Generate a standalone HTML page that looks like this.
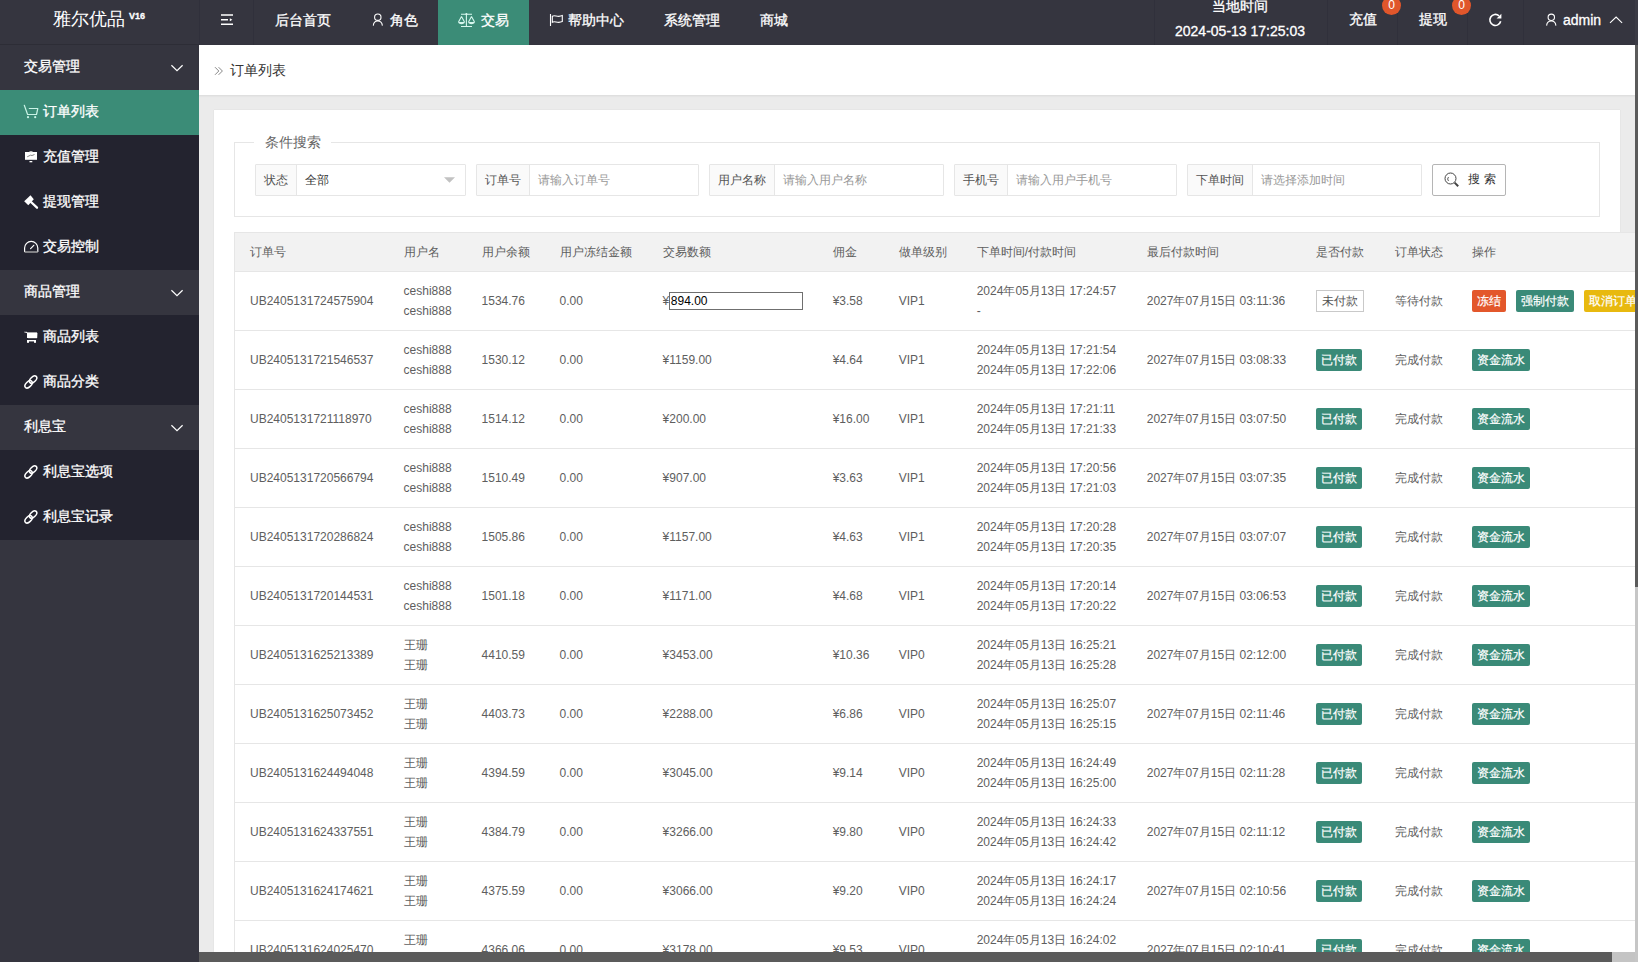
<!DOCTYPE html>
<html><head><meta charset="utf-8">
<style>
*{box-sizing:border-box;margin:0;padding:0}
html,body{width:1638px;height:962px;overflow:hidden}
body{font-family:"Liberation Sans",sans-serif;background:#ebebeb;position:relative;color:#666}
.abs{position:absolute}
#hd{left:0;top:0;width:1638px;height:45px;background:#35353f;color:#fff;font-size:14px}
#hd .t{position:absolute;white-space:nowrap;line-height:16px;-webkit-text-stroke:0.3px #fff}
#hd .sep{position:absolute;top:0;width:1px;height:45px;background:#30303b}
#logo{left:0;top:0;width:199px;height:45px}
#side{left:0;top:45px;width:199px;height:917px;background:#35353f;color:#fff;font-size:14px;-webkit-text-stroke:0.3px #fff}
#side .g,#side .i{position:relative;height:45px;line-height:43px;padding-bottom:2px;white-space:nowrap}
#side .g{background:#35353f;padding-left:24px}
#side .i{background:#23232f;padding-left:43px}
#side .i.on{background:#3b8c77}
#side .ic{position:absolute;left:24px;top:16px;width:14px;height:14px}
#side .arr{position:absolute;left:171px;top:19px}
#bc{left:199px;top:45px;width:1439px;height:50px;background:#fff;box-shadow:0 1px 2px rgba(0,0,0,.08)}
#card{left:214px;top:110px;width:1406px;height:900px;background:#fff;box-shadow:0 0 1px rgba(0,0,0,.12)}
#fs{left:234px;top:142px;width:1366px;height:75px;border:1px solid #e6e6e6}
#lg{left:254px;top:132px;width:77px;height:20px;background:#fff;font-size:14px;line-height:20px;text-align:center;color:#666}
.ig{position:absolute;top:164px;height:32px;border:1px solid #e6e6e6;border-radius:1px;background:#fff;font-size:12px}
.ig .lb{position:absolute;left:0;top:0;height:30px;line-height:30px;background:#fafafa;border-right:1px solid #e6e6e6;text-align:center;color:#555}
.ig .ph{position:absolute;top:0;line-height:30px;color:#999;white-space:nowrap}
#tbl{left:234px;top:232px;width:1483px;border-collapse:collapse;font-size:12px;color:#5e5e5e;background:#fff;table-layout:fixed;border-left:1px solid #e6e6e6}
#tbl th{background:#f2f2f2;font-weight:normal;text-align:left;height:39px;padding:0 15px;border-bottom:1px solid #e6e6e6;border-top:1px solid #e6e6e6;white-space:nowrap;line-height:20px}
#tbl td{height:59px;padding:9px 15px;line-height:20px;border-bottom:1px solid #e6e6e6;white-space:nowrap;vertical-align:middle}
.amt-in{display:inline-block;position:relative;top:-1px;margin-left:0;width:134px;height:18px;border:1px solid #6f6f6f;border-radius:0;line-height:16px;color:#000;padding-left:0.5px;vertical-align:middle}
.tag-out{display:inline-block;height:22px;line-height:20px;padding:0 5px;border:1px solid #c9c9c9;color:#555;border-radius:0}
.tag-g{display:inline-block;height:22px;line-height:22px;padding:0 5px;background:#3a8a78;color:#fff;-webkit-text-stroke:0.2px #fff;border-radius:2px}
.btn{display:inline-block;height:22px;line-height:22px;padding:0 5px;color:#fff;-webkit-text-stroke:0.2px #fff;border-radius:2px;margin-right:10px}
.b-o{background:#e3572b}.b-g{background:#3a8a78}.b-y{background:#e8b90f}
#sbh{left:199px;top:952px;width:1413px;height:10px;background:#5b5b5b}
#sbh2{left:1612px;top:952px;width:23px;height:10px;background:#c4c4c4}
#sbv{left:1635px;top:45px;width:3px;height:542px;background:#5b5b5b}
#sbv2{left:1635px;top:587px;width:3px;height:375px;background:#c6c6c6}
</style></head><body>
<div id="hd" class="abs">
    <svg class="abs" style="left:0;top:0;z-index:3" width="1638" height="45" viewBox="0 0 1638 45">
  <g stroke="#fff" stroke-width="1.4" fill="none">
   <path d="M221 15H233M221 19.8H228M221 24.3H233"/>
  </g>
  <path d="M229.8 18.3L232.4 19.8L229.8 21.3Z" fill="#fff"/>
  <g stroke="#fff" stroke-width="1.1" fill="none">
   <circle cx="377.8" cy="17.2" r="3.2"/>
   <path d="M373.3 25.6C373.6 22.6 375.6 21 377.8 21S382 22.6 382.4 25.6"/>
   <circle cx="1551.3" cy="17.3" r="3.2"/>
   <path d="M1546.6 25.6C1546.9 22.6 1548.9 21 1551.3 21S1555.6 22.6 1555.9 25.6"/>
   <path d="M1610 22.9L1616.1 17L1622.1 22.9"/>
  </g>
  <g stroke="#d6f7ee" stroke-width="1.1" fill="none">
   <path d="M461 14.3H472M466.4 14.3V26.5M461 26.5H472"/>
   <path d="M461.5 16.5L458.5 22M461.5 16.5L464.5 22M471.5 16.5L468.5 22M471.5 16.5L474.5 22"/>
  </g>
  <circle cx="466.4" cy="14" r="1" fill="#d6f7ee"/>
  <path d="M458.2 22H464.8C464.8 23.3 463.5 24.2 461.5 24.2S458.2 23.3 458.2 22Z M468.2 22H474.8C474.8 23.3 473.5 24.2 471.5 24.2S468.2 23.3 468.2 22Z" fill="#d6f7ee"/>
  <g stroke="#fff" stroke-width="1.1" fill="none">
   <path d="M550.5 14V26"/>
   <path d="M552.3 16.2C555 14.6 557.5 17.8 562.3 15.6V21.6C557.5 23.8 555 20.6 552.3 22.2Z"/>
  </g>
  <path d="M1500.7 21.3A5.5 5.5 0 1 1 1499 15.8" stroke="#fff" stroke-width="1.6" fill="none"/>
  <path d="M1496.6 18.6H1501.4V13.8Z" fill="#fff"/>
  </svg>
  <div class="t" style="left:53px;top:9px;font-size:18px;line-height:20px;-webkit-text-stroke:0">雅尔优品</div><div class="t" style="left:129px;top:11px;font-size:9px;line-height:10px;font-weight:bold">V16</div>
  <div class="sep" style="left:199px"></div>
  <div class="sep" style="left:253px"></div>
    <div class="t" style="left:275px;top:12px">后台首页</div>
    <div class="t" style="left:390px;top:12px">角色</div>
  <div class="abs" style="left:438px;top:0;width:91px;height:45px;background:#3b8c77"></div>
    <div class="t" style="left:481px;top:12px">交易</div>
    <div class="t" style="left:568px;top:12px">帮助中心</div>
  <div class="t" style="left:664px;top:12px">系统管理</div>
  <div class="t" style="left:760px;top:12px">商城</div>
  <div class="sep" style="left:1154px"></div>
  <div class="t" style="left:1212px;top:-2px">当地时间</div>
  <div class="t" style="left:1175px;top:23px">2024-05-13 17:25:03</div>
  <div class="sep" style="left:1327px"></div>
  <div class="t" style="left:1349px;top:11px">充值</div>
  <div class="abs" style="left:1382px;top:-4px;width:19px;height:19px;border-radius:50%;z-index:4;background:#e0562b;color:#fff;font-size:12px;line-height:19px;text-align:center">0</div>
  <div class="sep" style="left:1397px"></div>
  <div class="t" style="left:1419px;top:11px">提现</div>
  <div class="abs" style="left:1452px;top:-4px;width:19px;height:19px;border-radius:50%;z-index:4;background:#e0562b;color:#fff;font-size:12px;line-height:19px;text-align:center">0</div>
  <div class="sep" style="left:1467px"></div>
    <div class="sep" style="left:1523px"></div>
    <div class="t" style="left:1563px;top:12px">admin</div>
  </div>
<div id="side" class="abs">
  <div class="g">交易管理<svg class="arr" width="13" height="8" viewBox="0 0 13 8"><path d="M0.4 1.3L6 6.6L11.6 1.3" stroke="#fff" stroke-width="1.2" fill="none"/></svg></div>
  <div class="i on">订单列表</div>
  <div class="i">充值管理</div>
  <div class="i">提现管理</div>
  <div class="i">交易控制</div>
  <div class="g">商品管理<svg class="arr" width="13" height="8" viewBox="0 0 13 8"><path d="M0.4 1.3L6 6.6L11.6 1.3" stroke="#fff" stroke-width="1.2" fill="none"/></svg></div>
  <div class="i">商品列表</div>
  <div class="i">商品分类</div>
  <div class="g">利息宝<svg class="arr" width="13" height="8" viewBox="0 0 13 8"><path d="M0.4 1.3L6 6.6L11.6 1.3" stroke="#fff" stroke-width="1.2" fill="none"/></svg></div>
  <div class="i">利息宝选项</div>
  <div class="i">利息宝记录</div>
</div>
<svg class="abs" style="left:0;top:0;z-index:5" width="199" height="540" viewBox="0 0 199 540">
<g fill="none" stroke="#c9f3e6" stroke-width="1.2" stroke-linecap="round" stroke-linejoin="round">
<path d="M24.3 105.3L27.6 114.5H36.5L37.8 108.5H29.3"/>
</g>
<circle cx="28" cy="117.2" r="1.1" fill="#c9f3e6"/><circle cx="35.2" cy="117.2" r="1.1" fill="#c9f3e6"/>
<rect x="25" y="152" width="12" height="7.8" fill="#fff"/>
<rect x="29.5" y="151" width="3" height="1.2" fill="#bbb"/>
<path d="M27.2 156.8L30.5 155.2L32 155.5L34.5 154.5" stroke="#777" stroke-width="0.9" fill="none"/>
<rect x="29.5" y="161" width="2.8" height="1.3" fill="#fff"/>
<path d="M24.2 201.3L30.5 195.2L33.8 199.3L28.3 205.2Z" fill="#fff"/>
<path d="M31 202L37 207.7" stroke="#fff" stroke-width="2.3" stroke-linecap="round"/>
<path d="M24.6 252V248A6.6 6.6 0 0 1 37.8 248V252" stroke="#fff" stroke-width="1.2" fill="none"/>
<path d="M24.6 252H37.8" stroke="#aaa" stroke-width="1.4"/>
<path d="M30.6 248.6L33.8 245.3" stroke="#fff" stroke-width="1.2" stroke-linecap="round"/>
<path d="M24 332H27L28.2 336.5V338H37L37.2 333H27.5" fill="#fff" stroke="#fff" stroke-width="0.4"/>
<rect x="27" y="332.5" width="10" height="5.5" fill="#fff"/>
<rect x="27" y="340" width="9" height="1.4" fill="#fff"/>
<rect x="27" y="340" width="2" height="2.8" fill="#fff"/><rect x="34" y="340" width="2" height="2.8" fill="#fff"/>
<g fill="none" stroke="#fff" stroke-width="1.5">
<ellipse cx="33.1" cy="379.5" rx="4.4" ry="2.6" transform="rotate(-45 33.1 379.5)"/>
<ellipse cx="28.6" cy="384.3" rx="4.4" ry="2.6" transform="rotate(-45 28.6 384.3)"/>
<ellipse cx="33.1" cy="469.5" rx="4.4" ry="2.6" transform="rotate(-45 33.1 469.5)"/>
<ellipse cx="28.6" cy="474.3" rx="4.4" ry="2.6" transform="rotate(-45 28.6 474.3)"/>
<ellipse cx="33.1" cy="514.5" rx="4.4" ry="2.6" transform="rotate(-45 33.1 514.5)"/>
<ellipse cx="28.6" cy="519.3" rx="4.4" ry="2.6" transform="rotate(-45 28.6 519.3)"/>
</g>
</svg>
<div id="bc" class="abs">
  <svg class="abs" style="left:15px;top:21px" width="10" height="10" viewBox="0 0 10 10"><path d="M1 1.2L4.8 5L1 8.8M4.6 1.2L8.4 5L4.6 8.8" stroke="#888" stroke-width="1" fill="none"/></svg>
  <div class="abs" style="left:30.5px;top:16.5px;font-size:14px;color:#333;line-height:16px">订单列表</div>
</div>
<div id="card" class="abs"></div>
<div id="fs" class="abs"></div>
<div id="lg" class="abs">条件搜索</div>
<div class="ig" style="left:255px;width:211px"><div class="lb" style="width:41px">状态</div><div class="ph" style="left:49px;color:#333">全部</div><svg class="abs" style="left:188px;top:12px" width="11" height="6" viewBox="0 0 12 6"><path d="M0 0h12L6 6z" fill="#c2c2c2"/></svg></div>
<div class="ig" style="left:476px;width:223px"><div class="lb" style="width:53px">订单号</div><div class="ph" style="left:61px">请输入订单号</div></div>
<div class="ig" style="left:709px;width:235px"><div class="lb" style="width:65px">用户名称</div><div class="ph" style="left:73px">请输入用户名称</div></div>
<div class="ig" style="left:954px;width:223px"><div class="lb" style="width:53px">手机号</div><div class="ph" style="left:61px">请输入用户手机号</div></div>
<div class="ig" style="left:1187px;width:235px"><div class="lb" style="width:65px">下单时间</div><div class="ph" style="left:73px">请选择添加时间</div></div>
<div class="ig" style="left:1432px;width:74px;color:#333;border-color:#b5b5b5;border-radius:2px"><svg class="abs" style="left:11px;top:7px" width="17" height="17" viewBox="0 0 17 17"><circle cx="6.5" cy="6.5" r="5.5" stroke="#444" stroke-width="1" fill="none"/><path d="M10.6 10.6l3.6 3.6" stroke="#444" stroke-width="2"/><path d="M4.5 5a3 3 0 0 0 0 4" stroke="#333" stroke-width="0.8" fill="none"/></svg><div class="ph" style="left:35px;top:-1px;color:#333;letter-spacing:4px">搜索</div></div>
<table id="tbl" class="abs">
<colgroup><col style="width:154px"><col style="width:78px"><col style="width:78px"><col style="width:103px"><col style="width:170px"><col style="width:66px"><col style="width:78px"><col style="width:170px"><col style="width:169px"><col style="width:79px"><col style="width:77px"><col style="width:260px"></colgroup>
<tr><th>订单号</th><th>用户名</th><th>用户余额</th><th>用户冻结金额</th><th>交易数额</th><th>佣金</th><th>做单级别</th><th>下单时间/付款时间</th><th>最后付款时间</th><th>是否付款</th><th>订单状态</th><th>操作</th></tr>
<tr><td>UB2405131724575904</td><td>ceshi888<br>ceshi888</td><td>1534.76</td><td>0.00</td><td>¥<span class="amt-in">894.00</span></td><td>¥3.58</td><td>VIP1</td><td>2024年05月13日 17:24:57<br>-</td><td>2027年07月15日 03:11:36</td><td><span class="tag-out">未付款</span></td><td>等待付款</td><td class="ops"><span class="btn b-o">冻结</span><span class="btn b-g">强制付款</span><span class="btn b-y">取消订单</span></td></tr>
<tr><td>UB2405131721546537</td><td>ceshi888<br>ceshi888</td><td>1530.12</td><td>0.00</td><td>¥1159.00</td><td>¥4.64</td><td>VIP1</td><td>2024年05月13日 17:21:54<br>2024年05月13日 17:22:06</td><td>2027年07月15日 03:08:33</td><td><span class="tag-g">已付款</span></td><td>完成付款</td><td class="ops"><span class="btn b-g">资金流水</span></td></tr>
<tr><td>UB2405131721118970</td><td>ceshi888<br>ceshi888</td><td>1514.12</td><td>0.00</td><td>¥200.00</td><td>¥16.00</td><td>VIP1</td><td>2024年05月13日 17:21:11<br>2024年05月13日 17:21:33</td><td>2027年07月15日 03:07:50</td><td><span class="tag-g">已付款</span></td><td>完成付款</td><td class="ops"><span class="btn b-g">资金流水</span></td></tr>
<tr><td>UB2405131720566794</td><td>ceshi888<br>ceshi888</td><td>1510.49</td><td>0.00</td><td>¥907.00</td><td>¥3.63</td><td>VIP1</td><td>2024年05月13日 17:20:56<br>2024年05月13日 17:21:03</td><td>2027年07月15日 03:07:35</td><td><span class="tag-g">已付款</span></td><td>完成付款</td><td class="ops"><span class="btn b-g">资金流水</span></td></tr>
<tr><td>UB2405131720286824</td><td>ceshi888<br>ceshi888</td><td>1505.86</td><td>0.00</td><td>¥1157.00</td><td>¥4.63</td><td>VIP1</td><td>2024年05月13日 17:20:28<br>2024年05月13日 17:20:35</td><td>2027年07月15日 03:07:07</td><td><span class="tag-g">已付款</span></td><td>完成付款</td><td class="ops"><span class="btn b-g">资金流水</span></td></tr>
<tr><td>UB2405131720144531</td><td>ceshi888<br>ceshi888</td><td>1501.18</td><td>0.00</td><td>¥1171.00</td><td>¥4.68</td><td>VIP1</td><td>2024年05月13日 17:20:14<br>2024年05月13日 17:20:22</td><td>2027年07月15日 03:06:53</td><td><span class="tag-g">已付款</span></td><td>完成付款</td><td class="ops"><span class="btn b-g">资金流水</span></td></tr>
<tr><td>UB2405131625213389</td><td>王珊<br>王珊</td><td>4410.59</td><td>0.00</td><td>¥3453.00</td><td>¥10.36</td><td>VIP0</td><td>2024年05月13日 16:25:21<br>2024年05月13日 16:25:28</td><td>2027年07月15日 02:12:00</td><td><span class="tag-g">已付款</span></td><td>完成付款</td><td class="ops"><span class="btn b-g">资金流水</span></td></tr>
<tr><td>UB2405131625073452</td><td>王珊<br>王珊</td><td>4403.73</td><td>0.00</td><td>¥2288.00</td><td>¥6.86</td><td>VIP0</td><td>2024年05月13日 16:25:07<br>2024年05月13日 16:25:15</td><td>2027年07月15日 02:11:46</td><td><span class="tag-g">已付款</span></td><td>完成付款</td><td class="ops"><span class="btn b-g">资金流水</span></td></tr>
<tr><td>UB2405131624494048</td><td>王珊<br>王珊</td><td>4394.59</td><td>0.00</td><td>¥3045.00</td><td>¥9.14</td><td>VIP0</td><td>2024年05月13日 16:24:49<br>2024年05月13日 16:25:00</td><td>2027年07月15日 02:11:28</td><td><span class="tag-g">已付款</span></td><td>完成付款</td><td class="ops"><span class="btn b-g">资金流水</span></td></tr>
<tr><td>UB2405131624337551</td><td>王珊<br>王珊</td><td>4384.79</td><td>0.00</td><td>¥3266.00</td><td>¥9.80</td><td>VIP0</td><td>2024年05月13日 16:24:33<br>2024年05月13日 16:24:42</td><td>2027年07月15日 02:11:12</td><td><span class="tag-g">已付款</span></td><td>完成付款</td><td class="ops"><span class="btn b-g">资金流水</span></td></tr>
<tr><td>UB2405131624174621</td><td>王珊<br>王珊</td><td>4375.59</td><td>0.00</td><td>¥3066.00</td><td>¥9.20</td><td>VIP0</td><td>2024年05月13日 16:24:17<br>2024年05月13日 16:24:24</td><td>2027年07月15日 02:10:56</td><td><span class="tag-g">已付款</span></td><td>完成付款</td><td class="ops"><span class="btn b-g">资金流水</span></td></tr>
<tr><td>UB2405131624025470</td><td>王珊<br>王珊</td><td>4366.06</td><td>0.00</td><td>¥3178.00</td><td>¥9.53</td><td>VIP0</td><td>2024年05月13日 16:24:02<br>2024年05月13日 16:24:09</td><td>2027年07月15日 02:10:41</td><td><span class="tag-g">已付款</span></td><td>完成付款</td><td class="ops"><span class="btn b-g">资金流水</span></td></tr>
</table>
<div class="abs" style="left:0;top:44px;width:199px;height:1px;background:#2d2d36"></div>
<div id="sbh" class="abs"></div>
<div id="sbh2" class="abs"></div>
<div id="sbv" class="abs"></div>
<div class="abs" style="left:1635px;top:0;width:3px;height:45px;background:#3b3b45;z-index:6"></div>
<div id="sbv2" class="abs"></div>
</body></html>
